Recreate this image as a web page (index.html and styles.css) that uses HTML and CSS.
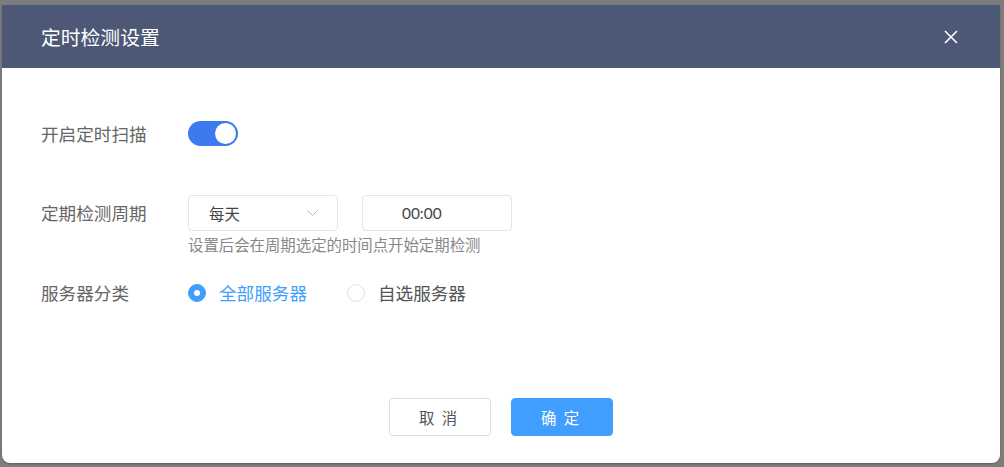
FILE: index.html
```html
<!DOCTYPE html>
<html lang="zh-CN">
<head>
    <meta charset="UTF-8">
    <title>定时检测设置</title>
    <link rel="stylesheet" href="styles.css">
</head>
<body>
    <div class="dialog">
        <div class="dialog-header">
            <span class="dialog-title">定时检测设置</span>
            <span class="close-btn">
                <svg width="14" height="14" viewBox="0 0 14 14">
                    <path d="M1 1 L13 13 M13 1 L1 13" stroke="#fff" stroke-width="1.6" fill="none"/>
                </svg>
            </span>
        </div>

        <div class="dialog-body">
            <!-- 开关 -->
            <div class="form-row row-switch">
                <div class="form-label">开启定时扫描</div>
                <div class="form-control">
                    <span class="switch is-on"><span class="switch-knob"></span></span>
                </div>
            </div>

            <!-- 检测周期 -->
            <div class="form-row row-period">
                <div class="form-label">定期检测周期</div>
                <div class="form-control">
                    <div class="inputs">
                        <div class="select">
                            <span>每天</span>
                            <svg width="11" height="6" viewBox="0 0 11 6">
                                <path d="M0.5 0.5 L5.5 5.5 L10.5 0.5" stroke="#b4b8c0" stroke-width="1" fill="none"/>
                            </svg>
                        </div>
                        <div class="time-input">00:00</div>
                    </div>
                    <div class="hint">设置后会在周期选定的时间点开始定期检测</div>
                </div>
            </div>

            <!-- 服务器分类 -->
            <div class="form-row row-radio">
                <div class="form-label">服务器分类</div>
                <div class="form-control radios">
                    <label class="radio is-checked"><span class="radio-dot"></span>全部服务器</label>
                    <label class="radio"><span class="radio-dot"></span>自选服务器</label>
                </div>
            </div>
        </div>

        <div class="dialog-footer">
            <button class="btn btn-cancel">取 消</button>
            <button class="btn btn-primary">确 定</button>
        </div>
    </div>
</body>
</html>
```

FILE: styles.css
```css
html, body {
    margin: 0;
    height: 100%;
}

body {
    background-color: #7d7d7d;
    font-family: "Noto Sans CJK SC", "Noto Sans", sans-serif;
    overflow: hidden;
}

.dialog {
    margin: 5px 0 0 2px;
    width: 998px;
    height: 458px;
    background-color: #fff;
    border-radius: 0 0 8px 8px;
    display: flex;
    flex-direction: column;
    box-shadow: 0 1px 2px rgba(0,0,0,0.25);
}

.dialog-header {
    height: 63px;
    background-color: #4d5877;
    display: flex;
    align-items: center;
    justify-content: space-between;
    padding: 0 42px 0 39px;
}

.dialog-title {
    color: #fff;
    font-size: 19.8px;
}

.close-btn {
    display: flex;
}

.dialog-body {
    flex: 1;
    padding: 53px 0 0 39px;
}

.form-row {
    display: flex;
    align-items: flex-start;
}

.form-label {
    width: 147px;
    font-size: 17.6px;
    color: #666;
    line-height: 25px;
}

.row-period {
    margin-top: 49px;
}

.row-period .form-label {
    line-height: 36px;
}

.row-radio {
    margin-top: 27px;
}

.row-radio .form-label {
    line-height: 24px;
}

/* switch */
.switch {
    display: block;
    width: 50px;
    height: 25px;
    border-radius: 13px;
    background-color: #3d7af0;
    position: relative;
}

.switch-knob {
    position: absolute;
    top: 2px;
    right: 2px;
    width: 21px;
    height: 21px;
    border-radius: 50%;
    background-color: #fff;
}

/* inputs */
.inputs {
    display: flex;
    gap: 24px;
}

.select, .time-input {
    box-sizing: border-box;
    width: 150px;
    height: 36px;
    border: 1px solid #e2e5ea;
    border-radius: 4px;
    font-size: 15.4px;
    color: #444;
    display: flex;
    align-items: center;
}

.select {
    justify-content: space-between;
    padding: 0 19px 0 20px;
}

.time-input {
    padding-left: 39px;
    font-family: "Lato", "Noto Sans", sans-serif;
}

.hint {
    font-size: 15.4px;
    color: #888;
    line-height: 20px;
    margin-top: 3px;
}

/* radios */
.radios {
    display: flex;
    gap: 40px;
}

.radio {
    display: flex;
    align-items: center;
    font-size: 17.6px;
    color: #555;
    line-height: 24px;
}

.radio-dot {
    box-sizing: border-box;
    width: 18px;
    height: 18px;
    border-radius: 50%;
    border: 1px solid #dcdfe6;
    margin-right: 13px;
    position: relative;
}

.radio.is-checked {
    color: #409eff;
}

.radio.is-checked .radio-dot {
    background-color: #409eff;
    border-color: #409eff;
}

.radio.is-checked .radio-dot::after {
    content: "";
    position: absolute;
    top: 5px;
    left: 5px;
    width: 6px;
    height: 6px;
    border-radius: 50%;
    background-color: #fff;
}

/* footer */
.dialog-footer {
    display: flex;
    justify-content: center;
    gap: 20px;
    padding-bottom: 27px;
}

.btn {
    width: 102px;
    height: 38px;
    border-radius: 4px;
    font-family: "Noto Sans CJK SC", sans-serif;
    font-size: 15.4px;
    letter-spacing: 2px;
    padding-left: 4px;
    cursor: pointer;
}

.btn-cancel {
    background-color: #fff;
    border: 1px solid #dcdfe6;
    color: #555;
}

.btn-primary {
    background-color: #409eff;
    border: 1px solid #409eff;
    color: #fff;
}
```
